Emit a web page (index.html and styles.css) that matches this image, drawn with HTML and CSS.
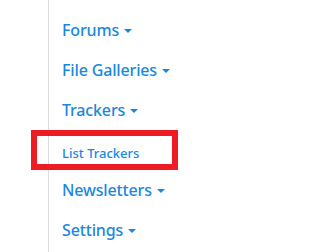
FILE: index.html
```html
<!DOCTYPE html>
<html>
<head>
<meta charset="utf-8">
<link rel="stylesheet" href="styles.css">
</head>
<body>
<div class="page">
  <nav class="sidebar">
    <ul class="menu">
      <li class="item"><a class="link">Forums<span class="caret"></span></a></li>
      <li class="item"><a class="link">File Galleries<span class="caret"></span></a></li>
      <li class="item"><a class="link">Trackers<span class="caret"></span></a></li>
      <li class="item sub highlighted"><a class="link">List Trackers</a><span class="mark"></span></li>
      <li class="item"><a class="link">Newsletters<span class="caret"></span></a></li>
      <li class="item"><a class="link">Settings<span class="caret"></span></a></li>
    </ul>
  </nav>
</div>
</body>
</html>
```
FILE: styles.css
```css
html, body {
  margin: 0;
  padding: 0;
  background: #ffffff;
}
.page {
  width: 288px;
  height: 252px;
  overflow: hidden;
  padding-left: 48px;
  box-sizing: border-box;
}
.sidebar {
  border-left: 1px solid #dcdcdc;
  height: 100%;
  box-sizing: border-box;
  padding-top: 10px;
}
.menu {
  list-style: none;
  margin: 0;
  padding: 0 0 0 13px;
}
.item {
  position: relative;
  height: 40px;
  line-height: 40px;
  font-family: "Noto Sans", "Open Sans", sans-serif;
  font-size: 16px;
  font-weight: 500;
  color: #1a87e0;
}
.link {
  color: inherit;
  text-decoration: none;
  display: inline-flex;
  align-items: center;
  letter-spacing: -0.15px;
}
.caret {
  display: inline-block;
  width: 0;
  height: 0;
  margin-left: 5px;
  margin-top: 2px;
  border-left: 4px solid transparent;
  border-right: 4px solid transparent;
  border-top: 4px solid #1a87e0;
}
.sub {
  font-size: 13px;
}
.sub .link {
  padding-top: 3px;
  letter-spacing: 0;
}
.mark {
  position: absolute;
  left: -31px;
  top: 0;
  width: 147px;
  height: 40px;
  box-sizing: border-box;
  border: 6px solid #ed1c24;
}
```
